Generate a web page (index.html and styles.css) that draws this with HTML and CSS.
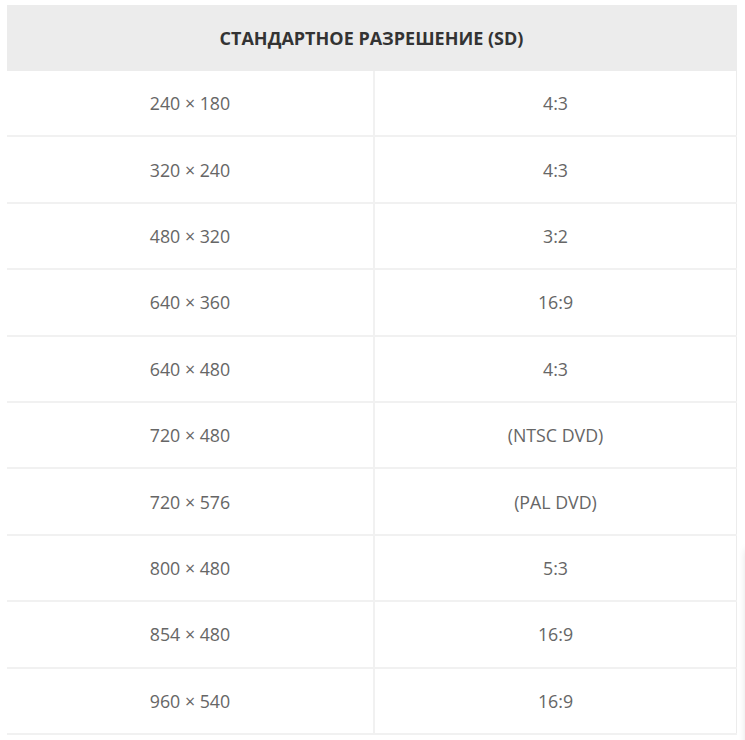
FILE: index.html
```html
<!DOCTYPE html>
<html lang="ru">
<head>
<meta charset="utf-8">
<link rel="stylesheet" href="styles.css">
</head>
<body>
<div class="wrap">
  <table class="res">
    <colgroup>
      <col class="col-size">
      <col class="col-ratio">
    </colgroup>
    <thead>
      <tr><th colspan="2">Стандартное разрешение (SD)</th></tr>
    </thead>
    <tbody>
      <tr><td>240 × 180</td><td>4:3</td></tr>
      <tr><td>320 × 240</td><td>4:3</td></tr>
      <tr><td>480 × 320</td><td>3:2</td></tr>
      <tr><td>640 × 360</td><td>16:9</td></tr>
      <tr><td>640 × 480</td><td>4:3</td></tr>
      <tr><td>720 × 480</td><td>(NTSC DVD)</td></tr>
      <tr><td>720 × 576</td><td>(PAL DVD)</td></tr>
      <tr><td>800 × 480</td><td>5:3</td></tr>
      <tr><td>854 × 480</td><td>16:9</td></tr>
      <tr><td>960 × 540</td><td>16:9</td></tr>
    </tbody>
  </table>
</div>
<div class="side-shadow"></div>
</body>
</html>
```

FILE: styles.css
```css
html, body {
  margin: 0;
  padding: 0;
  background: #ffffff;
}
body {
  font-family: "Open Sans", "Noto Sans", sans-serif;
  overflow: hidden;
}
.wrap {
  padding: 5px 8px 0 7px;
}
.res {
  width: 730px;
  border-collapse: collapse;
  table-layout: fixed;
}
.col-size {
  width: 367px;
}
.res th {
  background: #ececec;
  color: #333333;
  font-weight: 700;
  font-size: 18px;
  text-transform: uppercase;
  height: 66px;
  padding: 0;
  text-align: center;
  vertical-align: middle;
  border-right: 1px solid #ececec;
}
.res td {
  color: #666666;
  font-size: 17.8px;
  text-align: center;
  vertical-align: middle;
  padding: 0;
  height: 64.4px;
  border-bottom: 2px solid #f1f1f1;
}
.res td + td {
  border-left: 2px solid #f1f1f1;
  border-right: 1px solid #ececec;
}
.side-shadow {
  position: fixed;
  left: 747px;
  top: 550px;
  width: 200px;
  height: 400px;
  box-shadow: 0 0 8px rgba(0, 0, 0, 0.18);
  background: #fff;
}
```
